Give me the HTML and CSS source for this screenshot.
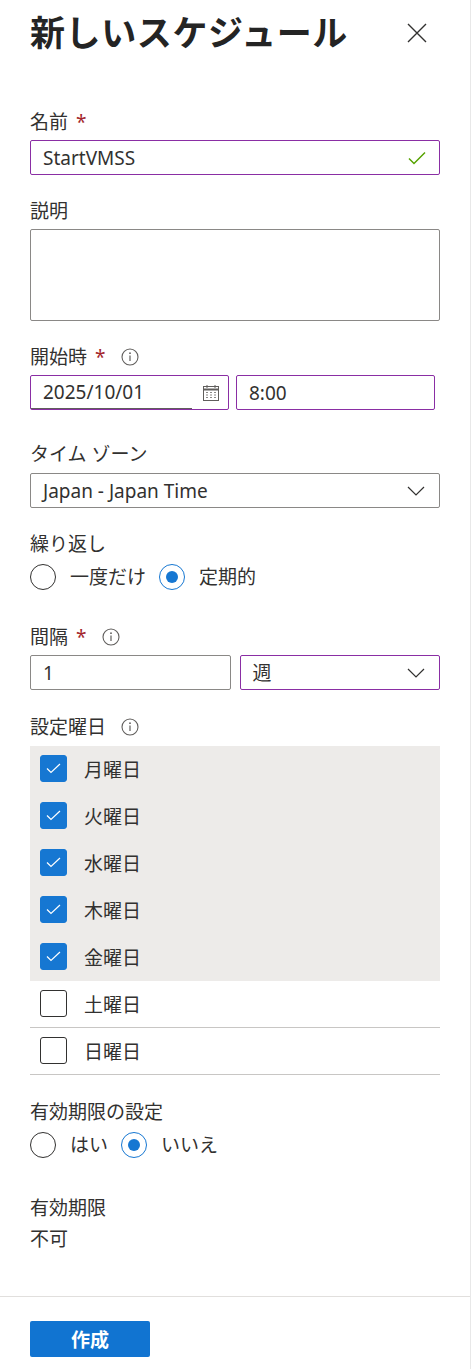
FILE: index.html
```html
<!DOCTYPE html>
<html lang="ja">
<head>
    <meta charset="UTF-8">
    <meta name="viewport" content="width=device-width, initial-scale=1.0">
    <title>新しいスケジュール</title>
    <link rel="stylesheet" href="styles.css">
</head>
<body>
    <div class="panel">
        <div class="head">
            <h1 class="title">新しいスケジュール</h1>
            <button class="close" aria-label="閉じる">
                <svg width="20" height="20" viewBox="0 0 20 20"><path d="M1 1 L19 19 M19 1 L1 19" stroke="#323130" stroke-width="1.4" fill="none"/></svg>
            </button>
        </div>

        <div class="field field-name">
            <div class="label"><span>名前</span><span class="req">*</span></div>
            <div class="box box-dirty">
                <span class="value">StartVMSS</span>
                <svg class="ok" width="18" height="14" viewBox="0 0 18 14"><path d="M1 7.5 L6 12.5 L17 1.5" stroke="#57a300" stroke-width="1.5" fill="none"/></svg>
            </div>
        </div>

        <div class="field field-desc">
            <div class="label"><span>説明</span></div>
            <div class="box area"></div>
        </div>

        <div class="field field-start">
            <div class="label"><span>開始時</span><span class="req">*</span>
                <svg class="info" width="18" height="18" viewBox="0 0 18 18"><circle cx="9" cy="9" r="8" stroke="#605e5c" stroke-width="1.1" fill="none"/><path d="M9 7.5 V13" stroke="#605e5c" stroke-width="1.2"/><circle cx="9" cy="5.2" r="0.9" fill="#605e5c"/></svg>
            </div>
            <div class="pair">
                <div class="box box-dirty date">
                    <span class="value date-text">2025/10/01</span>
                    <svg class="cal" width="18" height="18" viewBox="0 0 18 18">
                        <rect x="1.5" y="2.5" width="15" height="14" stroke="#605e5c" fill="none"/>
                        <path d="M1.5 5.5 H16.5" stroke="#605e5c" stroke-width="2"/>
                        <path d="M5 1 V4 M13 1 V4" stroke="#605e5c"/>
                        <path d="M4 8.5h2M8 8.5h2M12 8.5h2M4 11h2M8 11h2M12 11h2M4 13.5h2M8 13.5h2M12 13.5h2" stroke="#8a8886"/>
                    </svg>
                </div>
                <div class="box box-dirty time"><span class="value">8:00</span></div>
            </div>
        </div>

        <div class="field field-tz">
            <div class="label"><span>タイム ゾーン</span></div>
            <div class="box">
                <span class="value">Japan - Japan Time</span>
                <svg class="chev" width="18" height="10" viewBox="0 0 18 10"><path d="M1 1 L9 9 L17 1" stroke="#323130" stroke-width="1.2" fill="none"/></svg>
            </div>
        </div>

        <div class="field field-repeat">
            <div class="label"><span>繰り返し</span></div>
            <div class="radios">
                <label class="radio"><span class="dot"></span>一度だけ</label>
                <label class="radio on"><span class="dot"></span>定期的</label>
            </div>
        </div>

        <div class="field field-interval">
            <div class="label"><span>間隔</span><span class="req">*</span>
                <svg class="info" width="18" height="18" viewBox="0 0 18 18"><circle cx="9" cy="9" r="8" stroke="#605e5c" stroke-width="1.1" fill="none"/><path d="M9 7.5 V13" stroke="#605e5c" stroke-width="1.2"/><circle cx="9" cy="5.2" r="0.9" fill="#605e5c"/></svg>
            </div>
            <div class="pair pair-even">
                <div class="box"><span class="value">1</span></div>
                <div class="box box-dirty">
                    <span class="value">週</span>
                    <svg class="chev" width="18" height="10" viewBox="0 0 18 10"><path d="M1 1 L9 9 L17 1" stroke="#323130" stroke-width="1.2" fill="none"/></svg>
                </div>
            </div>
        </div>

        <div class="field field-days">
            <div class="label"><span>設定曜日</span>
                <svg class="info" width="18" height="18" viewBox="0 0 18 18"><circle cx="9" cy="9" r="8" stroke="#605e5c" stroke-width="1.1" fill="none"/><path d="M9 7.5 V13" stroke="#605e5c" stroke-width="1.2"/><circle cx="9" cy="5.2" r="0.9" fill="#605e5c"/></svg>
            </div>
            <div class="days">
                <div class="day picked"><span class="check"><svg width="15" height="11" viewBox="0 0 15 11"><path d="M1 5.5 L5 9.5 L14 1" stroke="#fff" stroke-width="1.2" fill="none"/></svg></span>月曜日</div>
                <div class="day picked"><span class="check"><svg width="15" height="11" viewBox="0 0 15 11"><path d="M1 5.5 L5 9.5 L14 1" stroke="#fff" stroke-width="1.2" fill="none"/></svg></span>火曜日</div>
                <div class="day picked"><span class="check"><svg width="15" height="11" viewBox="0 0 15 11"><path d="M1 5.5 L5 9.5 L14 1" stroke="#fff" stroke-width="1.2" fill="none"/></svg></span>水曜日</div>
                <div class="day picked"><span class="check"><svg width="15" height="11" viewBox="0 0 15 11"><path d="M1 5.5 L5 9.5 L14 1" stroke="#fff" stroke-width="1.2" fill="none"/></svg></span>木曜日</div>
                <div class="day picked"><span class="check"><svg width="15" height="11" viewBox="0 0 15 11"><path d="M1 5.5 L5 9.5 L14 1" stroke="#fff" stroke-width="1.2" fill="none"/></svg></span>金曜日</div>
                <div class="day"><span class="check"></span>土曜日</div>
                <div class="day"><span class="check"></span>日曜日</div>
            </div>
        </div>

        <div class="field field-expiry">
            <div class="label"><span>有効期限の設定</span></div>
            <div class="radios">
                <label class="radio"><span class="dot"></span>はい</label>
                <label class="radio on"><span class="dot"></span>いいえ</label>
            </div>
        </div>

        <div class="field field-until">
            <div class="label"><span>有効期限</span></div>
            <div class="plain">不可</div>
        </div>

        <div class="foot">
            <button class="primary">作成</button>
        </div>
    </div>
</body>
</html>
```

FILE: styles.css
```css
html, body {
    margin: 0;
    padding: 0;
    background: #fff;
}
body {
    font-family: "Noto Sans", "Noto Sans CJK JP", sans-serif;
    font-size: 19px;
    color: #323130;
}
.panel {
    width: 471px;
    min-height: 1369px;
    box-sizing: border-box;
    border-right: 1px solid #e8e8e8;
    padding: 10px 30px 0 30px;
    display: flex;
    flex-direction: column;
}
.head {
    display: flex;
    align-items: center;
    justify-content: space-between;
    height: 46px;
}
.title {
    margin: 0;
    font-size: 35px;
    font-weight: 700;
    line-height: 46px;
    color: #242424;
    letter-spacing: 0.6px;
}
.close {
    border: none;
    background: none;
    padding: 0;
    margin-right: 13px;
    width: 20px;
    height: 20px;
    display: flex;
}
.label {
    display: flex;
    align-items: center;
    line-height: 26px;
    height: 26px;
    margin-bottom: 5px;
}
.req {
    color: #a4262c;
    margin-left: 8px;
}
.info {
    margin-left: 15px;
}
.box {
    box-sizing: border-box;
    height: 35px;
    border: 1px solid #8a8886;
    border-radius: 2px;
    display: flex;
    align-items: center;
    padding: 0 13px 0 12px;
    position: relative;
}
.box-dirty {
    border-color: #8a2ea4;
}
.value {
    flex: 1;
    line-height: 26px;
}
.area {
    height: 92px;
}
.pair {
    display: flex;
    gap: 7px;
}
.pair .box {
    width: 199px;
}
.pair-even {
    gap: 9px;
}
.pair-even .box {
    width: 201px;
}
.date {
    padding-right: 8px;
}
.date-text {
    align-self: stretch;
    display: flex;
    align-items: center;
    margin-left: -12px;
    padding-left: 12px;
    border-bottom: 1px solid #605e5c;
    margin-right: 10px;
}
.chev {
    margin-right: 1px;
}

.field-name { margin-top: 53px; }
.field-desc { margin-top: 23px; }
.field-start { margin-top: 23px; }
.field-tz { margin-top: 31px; }
.field-tz .label { margin-bottom: 6px; }
.field-repeat { margin-top: 23px; }
.field-interval { margin-top: 34px; }
.field-days { margin-top: 24px; }
.field-expiry { margin-top: 24px; }
.field-until { margin-top: 37px; }

.radios {
    display: flex;
    gap: 13px;
    margin-top: 7px;
    height: 26px;
}
.radio {
    display: flex;
    align-items: center;
    gap: 14px;
    line-height: 26px;
}
.dot {
    box-sizing: border-box;
    width: 26px;
    height: 26px;
    border: 1px solid #323130;
    border-radius: 50%;
    display: flex;
    align-items: center;
    justify-content: center;
}
.radio.on .dot {
    border-color: #1677d2;
}
.radio.on .dot::after {
    content: "";
    width: 12px;
    height: 12px;
    border-radius: 50%;
    background: #1677d2;
}

.days {
    margin-top: 6px;
}
.day {
    box-sizing: border-box;
    height: 47px;
    display: flex;
    align-items: center;
    gap: 17px;
    padding-left: 10px;
    border-bottom: 1px solid #c8c6c4;
}
.day.picked {
    background: #edebe9;
    border-bottom-color: #edebe9;
}
.check {
    box-sizing: border-box;
    width: 27px;
    height: 27px;
    border: 1px solid #323130;
    border-radius: 3px;
    display: flex;
    align-items: center;
    justify-content: center;
    margin-top: -1px;
}
.day.picked .check {
    background: #1677d2;
    border-color: #1677d2;
}

.plain {
    line-height: 26px;
}

.foot {
    margin: 44px -30px 0 -30px;
    border-top: 1px solid #e1dfdd;
    padding: 24px 30px 0 30px;
}
.primary {
    width: 120px;
    height: 36px;
    border: none;
    border-radius: 2px;
    background: #1174d1;
    color: #fff;
    font-family: "Noto Sans", "Noto Sans CJK JP", sans-serif;
    font-size: 19px;
    font-weight: 700;
    padding: 0;
}
```
